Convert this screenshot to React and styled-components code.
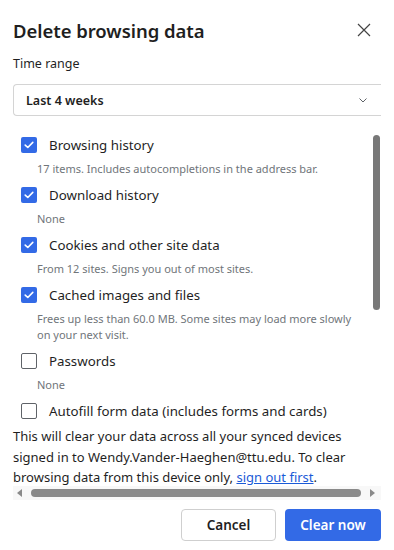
import React from "react";
import styled, { createGlobalStyle } from "styled-components";

const Global = createGlobalStyle`
  html, body {
    margin: 0;
    padding: 0;
    background: #ffffff;
  }
  body {
    font-family: "Noto Sans", "Open Sans", sans-serif;
    color: #1f1f1f;
  }
`;

const Dialog = styled.div`
  width: 394px;
  height: 550px;
  box-sizing: border-box;
  padding: 0 13px;
  display: flex;
  flex-direction: column;
  overflow: hidden;
`;

const Header = styled.div`
  display: flex;
  align-items: center;
  justify-content: space-between;
  height: 40px;
  margin-top: 10px;
`;

const Title = styled.h1`
  margin: 0;
  font-size: 18.5px;
  font-weight: 600;
  letter-spacing: -0.05px;
  color: #1f1f1f;
`;

const CloseButton = styled.button`
  border: none;
  background: none;
  padding: 0;
  width: 16px;
  height: 16px;
  margin-right: 9px;
  display: flex;
  align-items: center;
  justify-content: center;
  cursor: pointer;
`;

const FieldLabel = styled.div`
  margin-top: 6px;
  font-size: 12.5px;
  line-height: 16px;
  color: #1f1f1f;
`;

const Select = styled.div`
  margin-top: 12px;
  height: 32px;
  box-sizing: border-box;
  width: 368px;
  border: 1px solid #d4d4d4;
  border-right: none;
  border-radius: 4px 0 0 4px;
  display: flex;
  align-items: center;
  justify-content: space-between;
  padding: 0 14px 0 12px;
  font-size: 12.5px;
  font-weight: 600;
  color: #1f1f1f;
`;

const List = styled.div`
  position: relative;
  margin-top: 12px;
  height: 294px;
  overflow: hidden;
  padding-top: 5px;
  box-sizing: border-box;
`;

const ScrollThumb = styled.div`
  position: absolute;
  top: 7px;
  right: 1px;
  width: 7px;
  height: 175px;
  border-radius: 4px;
  background: #787878;
`;

const Item = styled.div`
  display: flex;
  flex-direction: column;
  margin-bottom: 6px;
`;

const ItemRow = styled.label`
  display: flex;
  align-items: center;
  height: 24px;
  padding-left: 8px;
  font-size: 13.3px;
  color: #1f1f1f;
  gap: 12px;
`;

const Box = styled.span`
  width: 16px;
  height: 16px;
  box-sizing: border-box;
  border-radius: 2px;
  flex-shrink: 0;
  display: flex;
  align-items: center;
  justify-content: center;
  background: ${(p) => (p.$checked ? "#336ae6" : "#ffffff")};
  border: ${(p) => (p.$checked ? "none" : "1.5px solid #5f6368")};
`;

const ItemSub = styled.div`
  margin-top: 4px;
  padding-left: 24px;
  padding-right: 20px;
  font-size: 11px;
  line-height: 16px;
  color: #70757a;
`;

const Notice = styled.p`
  margin: 4px 0 0;
  font-size: 13px;
  line-height: 20.5px;
  color: #1f1f1f;
`;

const Link = styled.a`
  color: #1a5ad7;
  text-decoration: underline;
`;

const HScroll = styled.div`
  margin-top: -2px;
  height: 14px;
  width: 368px;
  background: #f8f8f8;
  display: flex;
  align-items: center;
  gap: 9px;
  padding: 0 6px 0 4px;
  box-sizing: border-box;
`;

const Arrow = styled.span`
  width: 0;
  height: 0;
  border-top: 4px solid transparent;
  border-bottom: 4px solid transparent;
  ${(p) =>
    p.$dir === "left"
      ? "border-right: 5px solid #8a8a8a;"
      : "border-left: 5px solid #8a8a8a;"}
`;

const HThumb = styled.div`
  flex: 1;
  height: 8px;
  border-radius: 4px;
  background: #8a8a8a;
`;

const Footer = styled.div`
  display: flex;
  justify-content: flex-end;
  gap: 9px;
  margin-top: 9px;
  width: 368px;
`;

const Button = styled.button`
  height: 32px;
  width: ${(p) => p.$w}px;
  border-radius: 4px;
  font-family: "Noto Sans", "Open Sans", sans-serif;
  font-size: 13.5px;
  font-weight: 600;
  cursor: pointer;
  border: ${(p) => (p.$primary ? "none" : "1px solid #cfcfcf")};
  background: ${(p) => (p.$primary ? "#336ae6" : "#ffffff")};
  color: ${(p) => (p.$primary ? "#ffffff" : "#1f1f1f")};
`;

const items = [
  { label: "Browsing history", sub: "17 items. Includes autocompletions in the address bar.", checked: true },
  { label: "Download history", sub: "None", checked: true },
  { label: "Cookies and other site data", sub: "From 12 sites. Signs you out of most sites.", checked: true },
  {
    label: "Cached images and files",
    sub: "Frees up less than 60.0 MB. Some sites may load more slowly on your next visit.",
    checked: true,
  },
  { label: "Passwords", sub: "None", checked: false },
  { label: "Autofill form data (includes forms and cards)", checked: false },
];

function Check() {
  return (
    <svg width="10" height="8" viewBox="0 0 10 8" fill="none">
      <path d="M1.2 4.1 L3.8 6.5 L8.8 1.4" stroke="#fff" strokeWidth="1.6" strokeLinecap="round" strokeLinejoin="round" />
    </svg>
  );
}

export default function App() {
  return (
    <>
      <Global />
      <Dialog>
        <Header>
          <Title>Delete browsing data</Title>
          <CloseButton aria-label="Close">
            <svg width="14" height="14" viewBox="0 0 14 14">
              <path d="M1 1 L13 13 M13 1 L1 13" stroke="#444" strokeWidth="1.2" />
            </svg>
          </CloseButton>
        </Header>
        <FieldLabel>Time range</FieldLabel>
        <Select>
          Last 4 weeks
          <svg width="8" height="5" viewBox="0 0 8 5">
            <path d="M0.5 0.5 L4 4 L7.5 0.5" stroke="#5f6368" strokeWidth="1" fill="none" />
          </svg>
        </Select>
        <List>
          {items.map((it) => (
            <Item key={it.label}>
              <ItemRow>
                <Box $checked={it.checked}>{it.checked && <Check />}</Box>
                {it.label}
              </ItemRow>
              {it.sub && <ItemSub>{it.sub}</ItemSub>}
            </Item>
          ))}
          <ScrollThumb />
        </List>
        <Notice>
          This will clear your data across all your synced devices signed in to Wendy.Vander-Haeghen@ttu.edu. To clear
          browsing data from this device only, <Link href="#">sign out first</Link>.
        </Notice>
        <HScroll>
          <Arrow $dir="left" />
          <HThumb />
          <Arrow $dir="right" />
        </HScroll>
        <Footer>
          <Button $w={95}>Cancel</Button>
          <Button $w={96} $primary>
            Clear now
          </Button>
        </Footer>
      </Dialog>
    </>
  );
}
